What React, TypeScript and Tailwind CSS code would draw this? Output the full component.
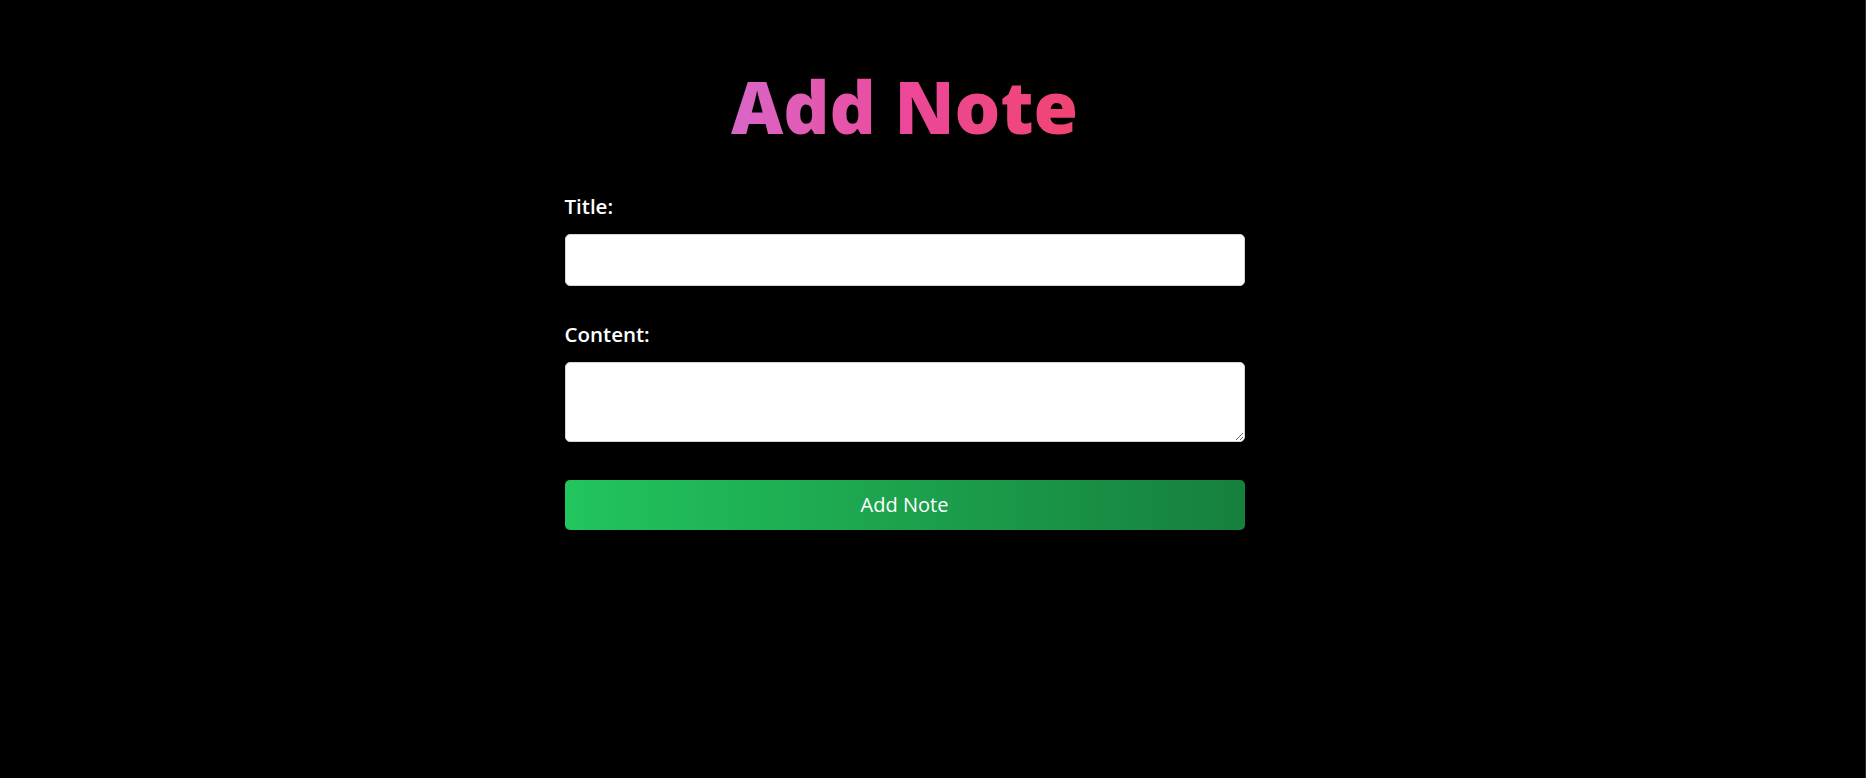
import React from 'react';

const App = () => {
	return (
		<div
			className="min-h-screen bg-black border-r border-[#2a2a2a] flex flex-col items-center pt-[70px] pr-[56px]"
			style={{ fontFamily: '"Open Sans", "Noto Sans", sans-serif' }}
		>
			<h1 className="inline-block text-center text-[72px] leading-[72px] font-extrabold bg-gradient-to-r from-[#d966c8] via-[#ec4899] to-[#f04470] bg-clip-text text-transparent">
				Add Note
			</h1>
			<form className="w-[680px] mt-[50px] flex flex-col" onSubmit={(e) => e.preventDefault()}>
				<label htmlFor="title" className="text-white text-[20.5px] font-semibold leading-[28px]">
					Title:
				</label>
				<input
					id="title"
					type="text"
					className="mt-[14px] h-[52px] w-full rounded-[5px] bg-white border border-gray-300 px-3 outline-none"
				/>
				<label htmlFor="content" className="mt-[34px] text-white text-[20.5px] font-semibold leading-[28px]">
					Content:
				</label>
				<textarea
					id="content"
					className="mt-[14px] h-[80px] w-full rounded-[5px] bg-white border border-gray-300 px-3 py-2 outline-none"
				/>
				<button
					type="submit"
					className="mt-[38px] h-[50px] w-full rounded-[5px] bg-gradient-to-r from-[#22c55e] to-[#16803d] text-white text-[20px]"
				>
					Add Note
				</button>
			</form>
		</div>
	);
};

export default App;
